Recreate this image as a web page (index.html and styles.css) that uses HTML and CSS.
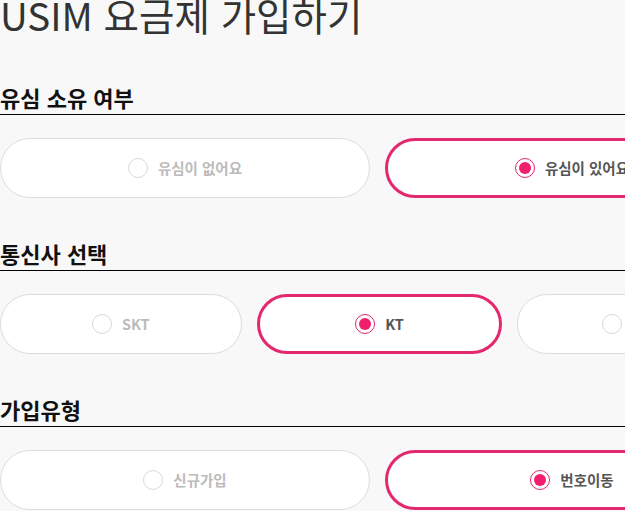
FILE: index.html
```html
<!DOCTYPE html>
<html lang="ko">
<head>
<meta charset="utf-8">
<title>USIM 요금제 가입하기</title>
<link rel="stylesheet" href="styles.css">
</head>
<body>
<div class="page">
  <h1 class="title">USIM 요금제 가입하기</h1>

  <section class="section">
    <h2 class="section-title">유심 소유 여부</h2>
    <div class="options">
      <div class="option"><span class="radio"></span><span class="label">유심이 없어요</span></div>
      <div class="option selected"><span class="radio"></span><span class="label">유심이 있어요</span></div>
    </div>
  </section>

  <section class="section">
    <h2 class="section-title">통신사 선택</h2>
    <div class="options">
      <div class="option"><span class="radio"></span><span class="label">SKT</span></div>
      <div class="option selected"><span class="radio"></span><span class="label">KT</span></div>
      <div class="option"><span class="radio"></span><span class="label">LG U+</span></div>
    </div>
  </section>

  <section class="section">
    <h2 class="section-title">가입유형</h2>
    <div class="options">
      <div class="option"><span class="radio"></span><span class="label">신규가입</span></div>
      <div class="option selected"><span class="radio"></span><span class="label">번호이동</span></div>
    </div>
  </section>
</div>
</body>
</html>
```

FILE: styles.css
```css
html, body {
  margin: 0;
  padding: 0;
  overflow: hidden;
  background: #f8f8f8;
}

body {
  font-family: "Noto Sans CJK KR", "Noto Sans", sans-serif;
  color: #333;
}

.page {
  width: 759px;
}

.title {
  margin: 0;
  font-size: 38.5px;
  line-height: 28px;
  font-weight: 400;
  color: #333;
}

.section {
  margin-top: 54px;
}

.section + .section {
  margin-top: 40px;
}

.section-title {
  margin: 0;
  font-size: 22px;
  line-height: 30px;
  font-weight: 700;
  color: #111;
  padding-bottom: 2px;
  border-bottom: 1px solid #000;
}

.options {
  display: flex;
  gap: 15px;
  margin-top: 23px;
}

.option {
  flex: 1 1 0;
  height: 60px;
  box-sizing: border-box;
  border: 1px solid #dcdcdc;
  border-radius: 30px;
  background: #fff;
  display: flex;
  align-items: center;
  justify-content: center;
  gap: 10px;
  font-size: 14.5px;
  font-weight: 700;
  color: #bbb;
}

.option.selected {
  border: 3px solid #e4286f;
  color: #555;
}

.radio {
  width: 20px;
  height: 20px;
  box-sizing: border-box;
  border-radius: 50%;
  border: 1px solid #d8d8d8;
  background: #fff;
  flex: none;
  display: flex;
  align-items: center;
  justify-content: center;
}

.option.selected .radio {
  border: 1.5px solid #e8246f;
}

.option.selected .radio::after {
  content: "";
  width: 12px;
  height: 12px;
  border-radius: 50%;
  background: #ef1f6e;
}

.label {
  line-height: 20px;
}
```
